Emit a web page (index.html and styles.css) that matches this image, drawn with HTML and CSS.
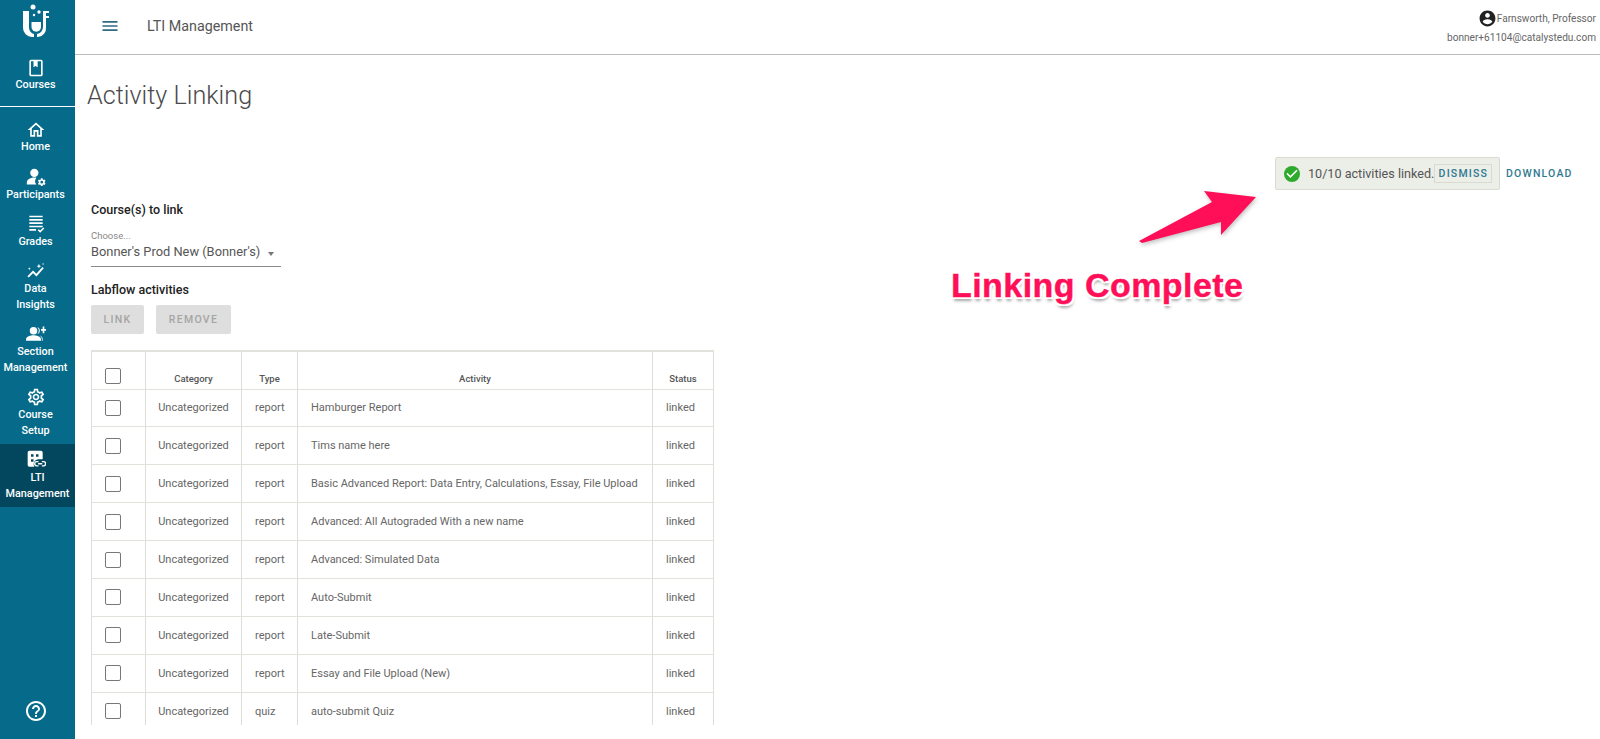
FILE: index.html
```html
<!DOCTYPE html>
<html lang="en">
<head>
  <meta charset="UTF-8" />
  <title>Activity Linking</title>
  <link rel="stylesheet" href="styles.css">
</head>
<body>

<aside class="sidebar">
  <div class="logo">
    <svg width="28" height="34" viewBox="0 0 28 34">
      <circle cx="11" cy="3" r="2.500" fill="#fff"/>
      <circle cx="17" cy="8" r="1.700" fill="#fff"/>
      <circle cx="12" cy="11" r="1.200" fill="#fff"/>
      <path d="M1 7h6v17a7 7 0 0 0 5 6v3h-2a9 9 0 0 1-9-9z" fill="#fff"/>
      <path d="M21 7h6v2h-3v3h3v2h-3v9a9 9 0 0 1-8 10h-1v-3a7 7 0 0 0 6-7z" fill="#fff"/>
      <path d="M9.500 18h9.500v5a4.750 4.750 0 0 1-9.500 0z" fill="#fff"/>
    </svg>
  </div>
  <a class="nav-item courses">
    <svg class="icon" viewBox="0 0 24 24"><path d="M18 2H6a2 2 0 0 0-2 2v16a2 2 0 0 0 2 2h12a2 2 0 0 0 2-2V4a2 2 0 0 0-2-2zM6 4h3v7l2.500-1.500L14 11V4h4v16H6z"/></svg>
    <span>Courses</span>
  </a>
  <nav class="nav-list">
    <a class="nav-item home">
      <svg class="icon" viewBox="0 0 24 24"><path d="M12 5.690l5 4.500V18h-2v-6H9v6H7v-7.810l5-4.500M12 3L2 12h3v8h6v-6h2v6h6v-8h3L12 3z"/></svg>
      <span>Home</span>
    </a>
    <a class="nav-item">
      <svg class="icon" viewBox="0 0 24 24"><circle cx="10" cy="7" r="5"/><path d="M1 21v-3c0-3 5-5.500 9-5.500 1 0 1.800.1 2.500.3A6.500 6.500 0 0 0 12.500 21z"/><path d="M22.400 17.600l1-.8-1-1.800-1.200.5a4 4 0 0 0-1.100-.6l-.2-1.300h-2l-.2 1.300a4 4 0 0 0-1.100.6l-1.200-.5-1 1.800 1 .8a4 4 0 0 0 0 1.300l-1 .8 1 1.800 1.200-.5a4 4 0 0 0 1.100.6l.2 1.300h2l.2-1.300a4 4 0 0 0 1.100-.6l1.200.5 1-1.800-1-.8a4 4 0 0 0 0-1.300zM18.900 19.800a1.600 1.600 0 1 1 0-3.200 1.600 1.600 0 0 1 0 3.200z"/></svg>
      <span>Participants</span>
    </a>
    <a class="nav-item">
      <svg class="icon" viewBox="0 0 24 24"><path d="M4 2h16v2H4zM4 6h16v2H4zM4 10h16v2H4zM4 14h16v2H4zM4 18h8v2H4z"/><path d="M14 19.500l1.300-1.300 1.700 1.700 3.700-3.700 1.300 1.300-5 5z"/></svg>
      <span>Grades</span>
    </a>
    <a class="nav-item">
      <svg class="icon" viewBox="0 0 24 24"><path d="M2.500 19l6-6 4 4 8-9" fill="none" stroke="#fff" stroke-width="2.200"/><path d="M15.500 9l.8-2 2-.8-2-.8-.8-2-.8 2-2 .8 2 .8zM4 11l.5-1.300L5.800 9.200 4.500 8.700 4 7.400l-.5 1.300-1.300.5 1.300.5zM20.500 5l.4-1 1-.4-1-.4-.4-1-.4 1-1 .4 1 .4z"/></svg>
      <span>Data<br>Insights</span>
    </a>
    <a class="nav-item">
      <svg class="icon" viewBox="0 0 24 24"><circle cx="9" cy="8" r="4.500"/><path d="M0 20v-2c0-2.700 5.800-4.500 9-4.500s9 1.800 9 4.500v2z"/><path d="M13.500 3.700a4.500 4.500 0 0 1 0 8.600 6.500 6.500 0 0 0 0-8.600zM16.500 13.800c2 .7 3.500 2.200 3.500 4.200v2h-1v-2c0-1.700-1-3-2.500-4.200zM20 6V3h2v3h2v2h-2v3h-2V8h-2V6z"/></svg>
      <span>Section<br>Management</span>
    </a>
    <a class="nav-item">
      <svg class="icon" viewBox="0 0 24 24"><path d="M19.430 12.980c.04-.32.070-.64.070-.98 0-.34-.03-.66-.07-.98l2.110-1.650c.19-.15.24-.42.12-.64l-2-3.460c-.09-.16-.26-.25-.44-.25-.06 0-.12.010-.17.030l-2.490 1c-.52-.4-1.080-.73-1.690-.98l-.38-2.650C14.460 2.180 14.250 2 14 2h-4c-.25 0-.46.180-.49.420l-.38 2.650c-.61.250-1.170.590-1.690.980l-2.490-1c-.06-.02-.12-.03-.18-.03-.17 0-.34.090-.43.250l-2 3.460c-.13.220-.07.490.12.640l2.110 1.650c-.04.320-.07.650-.07.980 0 .33.030.66.070.98l-2.110 1.650c-.19.150-.24.420-.12.640l2 3.460c.09.160.26.250.44.250.06 0 .12-.01.17-.03l2.490-1c.52.4 1.080.73 1.690.98l.38 2.650c.03.240.24.420.49.420h4c.25 0 .46-.18.49-.42l.38-2.650c.61-.25 1.170-.59 1.690-.98l2.490 1c.06.020.12.030.18.030.17 0 .34-.09.43-.25l2-3.460c.12-.22.07-.49-.12-.64l-2.110-1.650zm-1.980-1.710c.04.310.05.520.05.730 0 .21-.02.430-.05.730l-.14 1.130.89.7 1.080.84-.7 1.210-1.270-.51-1.040-.42-.9.680c-.43.320-.84.560-1.250.730l-1.060.43-.16 1.130-.2 1.350h-1.400l-.19-1.350-.16-1.130-1.060-.43c-.43-.18-.83-.41-1.230-.71l-.91-.7-1.060.43-1.270.51-.7-1.210 1.080-.84.89-.7-.14-1.130c-.03-.31-.05-.54-.05-.74s.020-.43.050-.73l.14-1.130-.89-.7-1.080-.84.7-1.210 1.270.51 1.040.42.9-.68c.43-.32.84-.56 1.250-.73l1.060-.43.16-1.130.2-1.350h1.390l.19 1.350.16 1.130 1.060.43c.43.180.83.410 1.230.710l.91.7 1.060-.43 1.270-.51.7 1.210-1.070.85-.89.7.14 1.130zM12 8c-2.210 0-4 1.790-4 4s1.790 4 4 4 4-1.790 4-4-1.790-4-4-4zm0 6c-1.100 0-2-.9-2-2s.9-2 2-2 2 .9 2 2-.9 2-2 2z"/></svg>
      <span>Course<br>Setup</span>
    </a>
    <a class="nav-item active">
      <svg class="icon" viewBox="0 0 24 24"><path d="M4 1h14a2 2 0 0 1 2 2v8h-5a6 6 0 0 0-5 9H4a2 2 0 0 1-2-2V3a2 2 0 0 1 2-2z"/><path d="M6 5h3v3H6zM12 5h3v3h-3zM6 11h3v3H6z" fill="#03475f"/><path d="M15 14h-2a2.500 2.500 0 0 0 0 5h2M19 14h2a2.500 2.500 0 0 1 0 5h-2M14.500 16.500h5" fill="none" stroke="#fff" stroke-width="1.600"/></svg>
      <span>LTI<br>Management</span>
    </a>
  </nav>
  <a class="help">
    <svg class="icon help-icon" viewBox="0 0 24 24"><path d="M11 18h2v-2h-2v2zm1-16C6.480 2 2 6.480 2 12s4.480 10 10 10 10-4.480 10-10S17.520 2 12 2zm0 18c-4.410 0-8-3.590-8-8s3.590-8 8-8 8 3.590 8 8-3.590 8-8 8zm0-14c-2.210 0-4 1.790-4 4h2c0-1.100.9-2 2-2s2 .9 2 2c0 2-3 1.750-3 5h2c0-2.250 3-2.500 3-5 0-2.210-1.790-4-4-4z"/></svg>
  </a>
</aside>

<div class="main">
  <header class="topbar">
    <svg class="menu-icon" viewBox="0 0 24 24"><path d="M3 18h18v-2H3v2zm0-5h18v-2H3v2zm0-7v2h18V6H3z"/></svg>
    <div class="page-name">LTI Management</div>
    <div class="user">
      <div class="user-name">
        <svg class="user-icon" viewBox="0 0 24 24"><path d="M12 2C6.480 2 2 6.480 2 12s4.480 10 10 10 10-4.480 10-10S17.520 2 12 2zm0 3c1.660 0 3 1.340 3 3s-1.340 3-3 3-3-1.340-3-3 1.340-3 3-3zm0 14.200c-2.500 0-4.710-1.280-6-3.220.03-1.990 4-3.080 6-3.080 1.990 0 5.970 1.090 6 3.080-1.290 1.940-3.500 3.220-6 3.220z"/></svg>
        Farnsworth, Professor
      </div>
      <div class="user-email">bonner+61104@catalystedu.com</div>
    </div>
  </header>

  <div class="content">
    <h1>Activity Linking</h1>

    <div class="status-row">
      <div class="alert">
        <svg class="check-icon" viewBox="2 2 20 20"><circle cx="12" cy="12" r="10" fill="#2eaa2c"/><path d="M10 17l-5-5 1.410-1.410L10 14.170l7.590-7.590L19 8l-9 9z" fill="#fff"/></svg>
        <span class="alert-text">10/10 activities linked.</span>
        <button class="dismiss">DISMISS</button>
      </div>
      <a class="download">DOWNLOAD</a>
    </div>

    <h2 class="first">Course(s) to link</h2>
    <div class="select">
      <div class="select-label">Choose...</div>
      <div class="select-value">Bonner's Prod New (Bonner's)<i class="caret"></i></div>
    </div>

    <h2>Labflow activities</h2>
    <div class="buttons">
      <button class="btn-off link">LINK</button>
      <button class="btn-off">REMOVE</button>
    </div>

    <div class="table-wrap">
      <table>
        <thead>
          <tr>
            <th class="col-check"><i class="box"></i></th>
            <th class="col-cat">Category</th>
            <th class="col-type">Type</th>
            <th class="col-act">Activity</th>
            <th class="col-status">Status</th>
          </tr>
        </thead>
        <tbody>
          <tr><td class="col-check"><i class="box"></i></td><td class="col-cat">Uncategorized</td><td>report</td><td>Hamburger Report</td><td>linked</td></tr>
          <tr><td class="col-check"><i class="box"></i></td><td class="col-cat">Uncategorized</td><td>report</td><td>Tims name here</td><td>linked</td></tr>
          <tr><td class="col-check"><i class="box"></i></td><td class="col-cat">Uncategorized</td><td>report</td><td>Basic Advanced Report: Data Entry, Calculations, Essay, File Upload</td><td>linked</td></tr>
          <tr><td class="col-check"><i class="box"></i></td><td class="col-cat">Uncategorized</td><td>report</td><td>Advanced: All Autograded With a new name</td><td>linked</td></tr>
          <tr><td class="col-check"><i class="box"></i></td><td class="col-cat">Uncategorized</td><td>report</td><td>Advanced: Simulated Data</td><td>linked</td></tr>
          <tr><td class="col-check"><i class="box"></i></td><td class="col-cat">Uncategorized</td><td>report</td><td>Auto-Submit</td><td>linked</td></tr>
          <tr><td class="col-check"><i class="box"></i></td><td class="col-cat">Uncategorized</td><td>report</td><td>Late-Submit</td><td>linked</td></tr>
          <tr><td class="col-check"><i class="box"></i></td><td class="col-cat">Uncategorized</td><td>report</td><td>Essay and File Upload (New)</td><td>linked</td></tr>
          <tr><td class="col-check"><i class="box"></i></td><td class="col-cat">Uncategorized</td><td>quiz</td><td>auto-submit Quiz</td><td>linked</td></tr>
        </tbody>
      </table>
    </div>
  </div>
</div>

<!-- Annotation drawn on top of the screenshot -->
<svg class="arrow" width="130" height="60" viewBox="1135 188 130 60">
  <polygon points="1256,197 1204,191 1212,202 1139,241 1142,243 1221,222 1221,235" fill="#fe0f57"/>
</svg>
<div class="note">Linking Complete</div>

</body>
</html>
```

FILE: styles.css
```css
:root {
  --teal: #066b8a;
  --teal-dark: #03475f;
  --pink: #fe0f57;
  --line: #e2e2dc;
}

html, body {
  height: 100%;
}

body {
  margin: 0;
  display: flex;
  height: 739px;
  overflow: hidden;
  font-family: Roboto, sans-serif;
  color: #555;
  background-color: #fff;
}

/* Sidebar */
.sidebar {
  width: 75px;
  flex-shrink: 0;
  display: flex;
  flex-direction: column;
  background-color: var(--teal);
  color: #fff;
}

.logo {
  height: 57px;
  display: flex;
  justify-content: center;
  padding: 4px 4px 0 0;
  box-sizing: border-box;
}

.nav-item {
  display: flex;
  flex-direction: column;
  align-items: center;
  padding: 6px 4px 5px 0;
  font-size: 10.800px;
  font-weight: 500;
  line-height: 16px;
  text-align: center;
}

.courses {
  height: 50px;
  padding: 1px 4px 0 0;
  box-sizing: border-box;
  border-bottom: 1px solid #fff;
}

.courses span {
  margin-top: -1px;
  margin-bottom: 1px;
}

.home span {
  margin-top: -1px;
  margin-bottom: 1px;
}

.nav-list {
  padding-top: 6.500px;
  flex: 1;
}

.active {
  background-color: var(--teal-dark);
  padding-right: 0;
}

.icon {
  width: 20px;
  height: 20px;
  fill: #fff;
  flex-shrink: 0;
}

.active .icon {
  margin-right: 4px;
}

.help {
  display: flex;
  justify-content: center;
  padding: 0 4px 16px 0;
}

.help-icon {
  width: 24px;
  height: 24px;
}

/* Top bar */
.main {
  flex: 1;
  min-width: 0;
  display: flex;
  flex-direction: column;
}

.topbar {
  height: 55px;
  flex-shrink: 0;
  box-sizing: border-box;
  display: flex;
  align-items: center;
  padding: 0 4px 3px 25px;
  border-bottom: 1px solid #bcbcbc;
}

.menu-icon {
  width: 20px;
  height: 20px;
  fill: #2f6b82;
}

.page-name {
  margin-left: 27px;
  font-size: 14.300px;
  color: #555;
  flex: 1;
}

.user {
  margin-top: 4px;
  font-size: 10.100px;
  text-align: right;
  color: #666;
}

.user-name {
  display: flex;
  align-items: center;
  justify-content: flex-end;
  height: 18px;
  margin-bottom: 2px;
}

.user-icon {
  width: 19px;
  height: 19px;
  fill: #222;
}

.user-email {
  line-height: 16px;
}

/* Content */
.content {
  padding: 0 0 0 16px;
  min-height: 0;
  flex: 1;
  display: flex;
  flex-direction: column;
}

h1 {
  margin: 24px 0 0 -4px;
  font-size: 25.200px;
  font-weight: 300;
  line-height: 34px;
  color: #4a4a4a;
}

.status-row {
  display: flex;
  justify-content: flex-end;
  align-items: center;
  gap: 6px;
  margin-top: 44px;
  padding-right: 26px;
}

.alert {
  display: flex;
  align-items: center;
  width: 225px;
  height: 33px;
  box-sizing: border-box;
  padding-left: 8px;
  font-size: 12.600px;
  background-color: #eceee8;
  border: 1px solid #d9dbd2;
  border-radius: 2px;
}

.alert-text {
  white-space: nowrap;
}

.check-icon {
  width: 16px;
  height: 16px;
  margin-right: 8px;
}

.dismiss {
  width: 58px;
  height: 19px;
  padding: 0;
  font: 500 10.500px Roboto, sans-serif;
  letter-spacing: 1.200px;
  color: #2f7a91;
  background: transparent;
  border: 1px solid #d9dbd2;
}

.download {
  width: 68px;
  font-size: 10.500px;
  font-weight: 500;
  letter-spacing: 1.200px;
  color: #2f7a91;
}

h2 {
  margin: 0;
  font-size: 12.500px;
  font-weight: 500;
  line-height: 16px;
  color: #222;
}

h2.first {
  margin-top: 12px;
}

.select {
  width: 190px;
  margin-top: 12px;
  border-bottom: 1px solid #8a8a8a;
  padding-bottom: 6px;
}

.select-label {
  font-size: 9.500px;
  line-height: 11px;
  color: #888;
  margin-bottom: 3px;
}

.select-value {
  display: flex;
  align-items: center;
  font-size: 12.850px;
  line-height: 16px;
}

.caret {
  margin: 3px 0 0 8px;
  border-top: 4px solid #777;
  border-left: 3.500px solid transparent;
  border-right: 3.500px solid transparent;
}

.select + h2 {
  margin-top: 15px;
}

.buttons {
  display: flex;
  gap: 12px;
  margin-top: 7px;
}

.btn-off {
  height: 29px;
  width: 75px;
  padding: 0;
  font: 500 10.500px Roboto, sans-serif;
  letter-spacing: 1.300px;
  color: #a5a5a5;
  background-color: #dedede;
  border: none;
  border-radius: 2px;
}

.btn-off.link {
  width: 53px;
}

.table-wrap {
  width: 624px;
  height: 375px;
  margin-top: 16px;
  overflow: hidden;
}

table {
  width: 623px;
  table-layout: fixed;
  border-collapse: collapse;
  font-size: 11px;
  color: #666;
}

table, th {
  border-top: 2px solid var(--line);
}

th {
  height: 38px;
  padding: 0 0 5px;
  vertical-align: bottom;
  font-size: 9.500px;
  font-weight: 500;
  color: #555;
  box-sizing: border-box;
}

td {
  height: 37.900px;
  padding: 0 0 0 13px;
  box-sizing: border-box;
  white-space: nowrap;
}

th, td {
  border-left: 1px solid #deded6;
  border-right: 1px solid #deded6;
  border-bottom: 1px solid var(--line);
}

.col-check {
  width: 54px;
}

td.col-check,
td.col-cat {
  padding: 0;
  text-align: center;
}

.col-cat {
  width: 96px;
}

.col-type {
  width: 56px;
}

.col-status {
  width: 61px;
}

.box {
  display: block;
  width: 14px;
  height: 14px;
  margin: 0 auto 0 13px;
  border: 1px solid #777;
  border-radius: 2px;
}

/* Annotation */
.arrow {
  position: absolute;
  left: 1135px;
  top: 188px;
  filter: drop-shadow(1px 2px 2px rgba(0, 0, 0, 0.25));
}

.note {
  position: absolute;
  left: 951px;
  top: 266px;
  font: bold 34px "Liberation Sans", sans-serif;
  letter-spacing: 0.450px;
  line-height: 38px;
  color: var(--pink);
  -webkit-text-stroke: 0.4px var(--pink);
  text-shadow: -2px 0 0 #fff, 2px 0 0 #fff, 0 -2px 0 #fff, 0 2px 0 #fff,
    -2px -2px 0 #fff, 2px -2px 0 #fff, -2px 2px 0 #fff, 2px 2px 0 #fff,
    1px 4px 3px rgba(0, 0, 0, 0.35);
}
```
